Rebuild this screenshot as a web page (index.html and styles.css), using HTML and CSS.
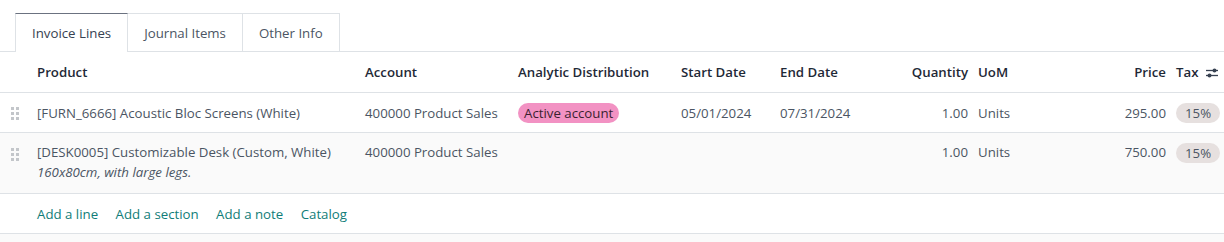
FILE: index.html
```html
<!DOCTYPE html>
<html lang="en">
  <head>
    <meta charset="UTF-8" />
    <title>Invoice Lines</title>
    <link rel="stylesheet" href="styles.css">
  </head>
  <body>
    <div class="tabs">
      <div class="tab active">Invoice Lines</div>
      <div class="tab">Journal Items</div>
      <div class="tab">Other Info</div>
    </div>
    <table class="lines">
      <colgroup>
        <col style="width: 32px" />
        <col style="width: 328px" />
        <col style="width: 153px" />
        <col style="width: 163px" />
        <col style="width: 99px" />
        <col style="width: 95px" />
        <col style="width: 103px" />
        <col style="width: 97px" />
        <col style="width: 101px" />
        <col style="width: 53px" />
      </colgroup>
      <thead>
        <tr>
          <th></th>
          <th>Product</th>
          <th>Account</th>
          <th>Analytic Distribution</th>
          <th>Start Date</th>
          <th>End Date</th>
          <th class="num">Quantity</th>
          <th>UoM</th>
          <th class="num">Price</th>
          <th class="tax-head">
            <span>Tax</span>
            <svg class="sliders" width="14" height="12" viewBox="0 0 14 12">
              <line x1="1" y1="3.5" x2="13" y2="3.5" stroke="#374151" stroke-width="1.3" />
              <circle cx="9.5" cy="3.5" r="2" fill="#374151" />
              <line x1="1" y1="8.5" x2="13" y2="8.5" stroke="#374151" stroke-width="1.3" />
              <circle cx="4.5" cy="8.5" r="2" fill="#374151" />
            </svg>
          </th>
        </tr>
      </thead>
      <tbody>
        <tr>
          <td class="handle">
            <svg class="grip" width="9" height="13" viewBox="0 0 9 13">
              <rect x="0" y="0" width="3" height="3" />
              <rect x="5" y="0" width="3" height="3" />
              <rect x="0" y="5" width="3" height="3" />
              <rect x="5" y="5" width="3" height="3" />
              <rect x="0" y="10" width="3" height="3" />
              <rect x="5" y="10" width="3" height="3" />
            </svg>
          </td>
          <td>[FURN_6666] Acoustic Bloc Screens (White)</td>
          <td>400000 Product Sales</td>
          <td><span class="tag pink">Active account</span></td>
          <td>05/01/2024</td>
          <td>07/31/2024</td>
          <td class="num">1.00</td>
          <td>Units</td>
          <td class="num">295.00</td>
          <td><span class="tag gray">15%</span></td>
        </tr>
        <tr class="tall">
          <td class="handle top">
            <svg class="grip" width="9" height="13" viewBox="0 0 9 13">
              <rect x="0" y="0" width="3" height="3" />
              <rect x="5" y="0" width="3" height="3" />
              <rect x="0" y="5" width="3" height="3" />
              <rect x="5" y="5" width="3" height="3" />
              <rect x="0" y="10" width="3" height="3" />
              <rect x="5" y="10" width="3" height="3" />
            </svg>
          </td>
          <td class="top">
            [DESK0005] Customizable Desk (Custom, White)
            <div class="note">160x80cm, with large legs.</div>
          </td>
          <td class="top">400000 Product Sales</td>
          <td class="top"></td>
          <td class="top"></td>
          <td class="top"></td>
          <td class="num top">1.00</td>
          <td class="top">Units</td>
          <td class="num top">750.00</td>
          <td class="top"><span class="tag gray">15%</span></td>
        </tr>
        <tr class="add-row">
          <td></td>
          <td colspan="9">
            <a href="#">Add a line</a>
            <a href="#">Add a section</a>
            <a href="#">Add a note</a>
            <a href="#">Catalog</a>
          </td>
        </tr>
      </tbody>
    </table>
    <div class="foot"></div>
  </body>
</html>
```

FILE: styles.css
```css
body {
  margin: 0;
  font-family: "Open Sans", "Noto Sans", sans-serif;
  font-size: 13.25px;
  color: #374151;
  background-color: #fff;
}
.tabs {
  display: flex;
  padding: 13px 0 0 15px;
  border-bottom: 1px solid #dee2e6;
}
.tab {
  height: 37px;
  line-height: 39px;
  padding: 0 16px;
  border: 1px solid #dee2e6;
  border-bottom: none;
  border-left: none;
  color: #4b5563;
  margin-bottom: -1px;
  background-color: #fff;
}
.tab.active {
  border-left: 1px solid #dee2e6;
  border-top-color: #6b7280;
  color: #374151;
  height: 38px;
}
.lines {
  width: 1224px;
  table-layout: fixed;
  border-collapse: collapse;
}
.lines th,
.lines td {
  padding: 0 5px;
  text-align: left;
  white-space: nowrap;
  overflow: hidden;
  border-bottom: 1px solid #dee2e6;
}
.lines th {
  height: 40px;
  font-weight: 600;
  color: #1f2937;
}
.lines td {
  height: 39px;
  color: #4b5563;
}
.lines .num {
  text-align: right;
}
.tax-head span {
  vertical-align: middle;
}
.sliders {
  vertical-align: middle;
  margin-left: 3px;
}
.tall td {
  height: 50px;
  background-color: #fafafa;
}
.lines td.top {
  vertical-align: top;
  padding-top: 10px;
}
.note {
  font-style: italic;
  margin-top: 2px;
}
.lines td.handle {
  padding-left: 11px;
}
.grip {
  fill: #c3c6ca;
  vertical-align: middle;
}
.handle.top .grip {
  margin-top: 3px;
}
.tag {
  display: inline-block;
  padding: 0 6px;
  line-height: 20px;
  border-radius: 10px;
}
.tag.pink {
  background-color: #f292c3;
  color: #3b1f2f;
}
.tag.gray {
  background-color: #e6e0df;
  color: #4b5563;
  padding: 0 9px;
}
.add-row a {
  color: #107d78;
  text-decoration: none;
  margin-right: 14px;
}
.foot {
  height: 12px;
  background-color: #fafafa;
}
```
